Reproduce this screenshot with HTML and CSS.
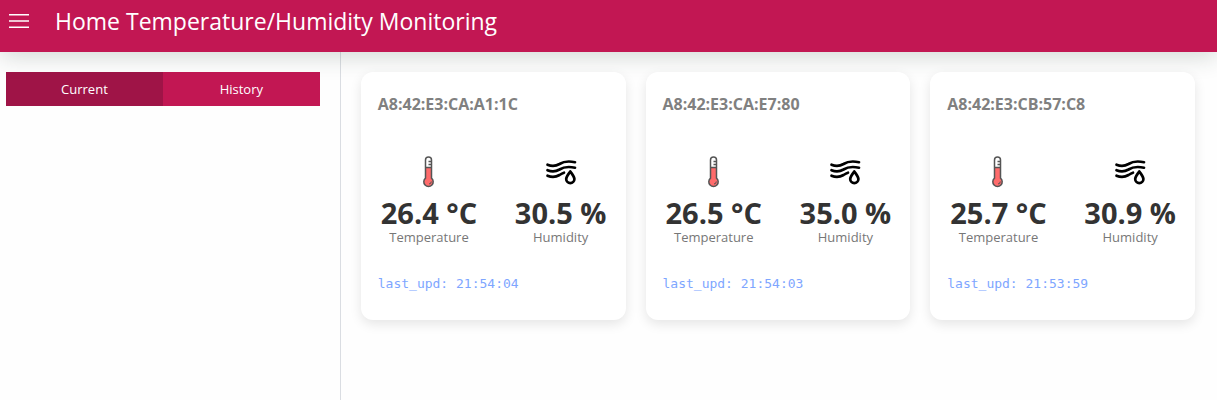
FILE: index.html
```html
<!DOCTYPE html>
<html lang="en">
<head>
<meta charset="utf-8">
<meta name="viewport" content="width=device-width, initial-scale=1">
<title>Home Temperature/Humidity Monitoring</title>
<link rel="stylesheet" href="styles.css">
</head>
<body>
<svg class="sprite" aria-hidden="true">
  <symbol id="thermometer" viewBox="0 0 32 32">
    <path d="M12.500 4a3 3 0 0 1 6 0V22.200a4.700 4.700 0 1 1-6 0Z" fill="#fff"/>
    <path d="M12.500 11.500h6V22.200a4.700 4.700 0 1 1-6 0Z" fill="#ff6b6b"/>
    <path d="M12.500 4a3 3 0 0 1 6 0V22.200a4.700 4.700 0 1 1-6 0ZM12.500 11.500h6M15.500 5.500h3M15.500 8.500h3" fill="none" stroke="#555" stroke-width="1.500"/>
    <path d="M18.300 25.500a2.500 2.500 0 0 1-2.300 2.500" fill="none" stroke="#555" stroke-width="1"/>
  </symbol>
  <symbol id="humidity" viewBox="0 0 32 32">
    <g fill="none" stroke="#000" stroke-width="2.700" stroke-linecap="round" stroke-linejoin="round">
      <path d="M2.500 8.700C7 10.600 10.500 10.400 14.500 8C18.500 5.400 23 4.700 30 6.200"/>
      <path d="M2.500 14.200C7 16.100 10.500 15.900 14.500 13.500C18.500 10.900 23 10.200 30 11.700"/>
      <path d="M2.500 19.700C7 21.600 10.500 21.400 14.500 19C16 18 17.300 17.200 19 16.700"/>
      <path d="M25.300 15.400C23.300 18.400 21.200 20.600 21.200 23a4.100 4.100 0 0 0 8.200 0C29.400 20.600 27.300 18.400 25.300 15.400Z"/>
    </g>
  </symbol>
</svg>
<header class="topbar">
  <button class="menu" type="button" aria-label="Menu">
    <svg width="20" height="16" viewBox="0 0 20 16" stroke="#fff" stroke-width="1.500"><path d="M0 1.700h20M0 8h20M0 14.300h20"/></svg>
  </button>
  <h1 class="title">Home Temperature/Humidity Monitoring</h1>
</header>
<div class="layout">
  <aside class="sidebar">
    <nav class="tabs">
      <button class="tab active" type="button">Current</button>
      <button class="tab" type="button">History</button>
    </nav>
  </aside>
  <main class="cards">
    <article class="card">
      <h2 class="device">A8:42:E3:CA:A1:1C</h2>
      <div class="readings">
        <div class="reading"><svg class="icon"><use href="#thermometer"/></svg><strong class="value">26.4 °C</strong><span class="label">Temperature</span></div>
        <div class="reading"><svg class="icon"><use href="#humidity"/></svg><strong class="value">30.5 %</strong><span class="label">Humidity</span></div>
      </div>
      <p class="updated">last_upd: 21:54:04</p>
    </article>
    <article class="card">
      <h2 class="device">A8:42:E3:CA:E7:80</h2>
      <div class="readings">
        <div class="reading"><svg class="icon"><use href="#thermometer"/></svg><strong class="value">26.5 °C</strong><span class="label">Temperature</span></div>
        <div class="reading"><svg class="icon"><use href="#humidity"/></svg><strong class="value">35.0 %</strong><span class="label">Humidity</span></div>
      </div>
      <p class="updated">last_upd: 21:54:03</p>
    </article>
    <article class="card">
      <h2 class="device">A8:42:E3:CB:57:C8</h2>
      <div class="readings">
        <div class="reading"><svg class="icon"><use href="#thermometer"/></svg><strong class="value">25.7 °C</strong><span class="label">Temperature</span></div>
        <div class="reading"><svg class="icon"><use href="#humidity"/></svg><strong class="value">30.9 %</strong><span class="label">Humidity</span></div>
      </div>
      <p class="updated">last_upd: 21:53:59</p>
    </article>
  </main>
</div>
</body>
</html>
```
FILE: styles.css
```css
* { box-sizing: border-box; }
body {
  margin: 0;
  min-height: 100vh;
  display: flex;
  flex-direction: column;
  background: #fefefe;
  font-family: "Segoe UI", "Open Sans", "Noto Sans", sans-serif;
}
.sprite { display: none; }
.topbar {
  position: relative;
  z-index: 1;
  display: flex;
  align-items: center;
  gap: 26px;
  padding: 0 9px 10px;
  height: 52px;
  background: #c21753;
  box-shadow: 0 4px 24px rgba(30, 50, 40, 0.2);
}
.menu { display: flex; padding: 0; border: 0; background: none; }
.title { margin: 0; color: #fff; font-size: 23px; font-weight: 400; line-height: 32px; }
.layout { flex: 1; display: flex; }
.sidebar { width: 28%; padding: 20px 20px 20px 6px; border-right: 1px solid #dadde2; }
.tabs { display: flex; }
.tab {
  flex: 1;
  height: 34px;
  padding: 0;
  border: 0;
  background: #c21753;
  color: #fff;
  font: inherit;
  font-size: 13px;
}
.tab.active { background: #9f1447; }
.cards {
  flex: 1;
  display: grid;
  grid-template-columns: repeat(3, 1fr);
  align-content: start;
  gap: 20px;
  padding: 20px 22px 20px 20px;
}
.card {
  position: relative;
  z-index: 2;
  padding: 21px 17px 26px;
  border-radius: 12px;
  background: #fff;
  box-shadow: 0 4px 12px rgba(0, 0, 0, 0.1);
}
.device { margin: 0 0 41px; color: #808080; font-size: 16px; font-weight: 700; line-height: 22px; }
.readings { display: flex; justify-content: space-between; padding: 0 2px 0 3px; }
.reading { display: flex; flex-direction: column; align-items: center; }
.icon { width: 32px; height: 32px; margin-bottom: 9px; }
.value { color: #333; font-size: 29px; line-height: 32px; white-space: nowrap; }
.label { color: #777; font-size: 13px; line-height: 16px; }
.updated { margin: 29px 0 0; color: #7ea6ff; font-family: Consolas, "DejaVu Sans Mono", monospace; font-size: 13px; line-height: 20px; }
```
